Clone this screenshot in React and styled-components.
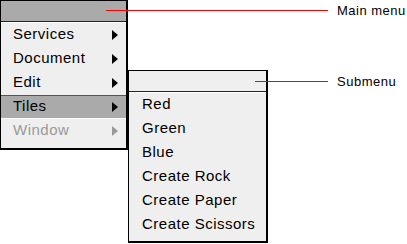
import React from "react";
import styled, { createGlobalStyle } from "styled-components";

const Global = createGlobalStyle`
  body {
    margin: 0;
    background: #ffffff;
    font-family: "Liberation Sans", Arial, sans-serif;
  }
`;

const Stage = styled.div`
  position: relative;
  width: 407px;
  height: 244px;
  overflow: hidden;
`;

const Menu = styled.div`
  position: ${(p) => (p.$sub ? "absolute" : "relative")};
  left: ${(p) => (p.$sub ? "128px" : "0")};
  top: ${(p) => (p.$sub ? "70px" : "0")};
  width: ${(p) => p.$width}px;
  box-sizing: border-box;
  background: #efefef;
  border: 1px solid #000;
  border-right-width: 2px;
  border-bottom-width: 2px;
  display: flex;
  flex-direction: column;
  padding-bottom: ${(p) => p.$pad}px;
  z-index: ${(p) => (p.$sub ? 2 : 1)};
`;

const TitleBar = styled.div`
  height: 20px;
  background: ${(p) => (p.$dark ? "#aaaaaa" : "#efefef")};
  border-bottom: 1px solid #222;
  box-shadow: 0 1px 0 #ffffff;
  margin-bottom: 1px;
`;

const Item = styled.div`
  height: 24px;
  box-sizing: border-box;
  display: flex;
  align-items: center;
  justify-content: space-between;
  padding: 0 8px 3px ${(p) => p.$indent}px;
  font-size: 15px;
  letter-spacing: 0.5px;
  white-space: nowrap;
  color: ${(p) => (p.$disabled ? "#9a9a9a" : "#000")};
  background: ${(p) => (p.$active ? "#aaaaaa" : "transparent")};
  border-top: 1px solid ${(p) => (p.$active ? "#555" : "transparent")};
  border-bottom: 1px solid ${(p) => (p.$active ? "#fff" : "transparent")};
`;

const Arrow = styled.span`
  width: 0;
  height: 0;
  margin-top: 2px;
  border-top: 5px solid transparent;
  border-bottom: 5px solid transparent;
  border-left: 6px solid ${(p) => (p.$disabled ? "#9a9a9a" : "#000")};
`;

const Callout = styled.div`
  position: absolute;
  left: ${(p) => p.$x}px;
  top: ${(p) => p.$y}px;
  display: flex;
  align-items: flex-start;
  gap: 9px;
  white-space: nowrap;
  z-index: 3;
`;

const Line = styled.span`
  flex-shrink: 0;
  width: ${(p) => p.$len}px;
  height: 0;
  margin-top: 6px;
  border-top: 1px solid #ff0000;
`;

const Label = styled.span`
  font-size: 13px;
  letter-spacing: 0.5px;
  color: #000;
  line-height: 13px;
`;

const mainItems = [
  { label: "Services" },
  { label: "Document" },
  { label: "Edit" },
  { label: "Tiles", active: true },
  { label: "Window", disabled: true },
];

const subItems = ["Red", "Green", "Blue", "Create Rock", "Create Paper", "Create Scissors"];

export default function App() {
  return (
    <Stage>
      <Global />
      <Menu $width={128} $pad={5}>
        <TitleBar $dark />
        {mainItems.map((it) => (
          <Item key={it.label} $indent={12} $active={it.active} $disabled={it.disabled}>
            {it.label}
            <Arrow $disabled={it.disabled} />
          </Item>
        ))}
      </Menu>
      <Menu $sub $width={140} $pad={4}>
        <TitleBar />
        {subItems.map((s) => (
          <Item key={s} $indent={13}>
            {s}
          </Item>
        ))}
      </Menu>
      <Callout $x={106} $y={4}>
        <Line $len={222} />
        <Label>Main menu</Label>
      </Callout>
      <Callout $x={255} $y={75}>
        <Line $len={73} />
        <Label>Submenu</Label>
      </Callout>
    </Stage>
  );
}
